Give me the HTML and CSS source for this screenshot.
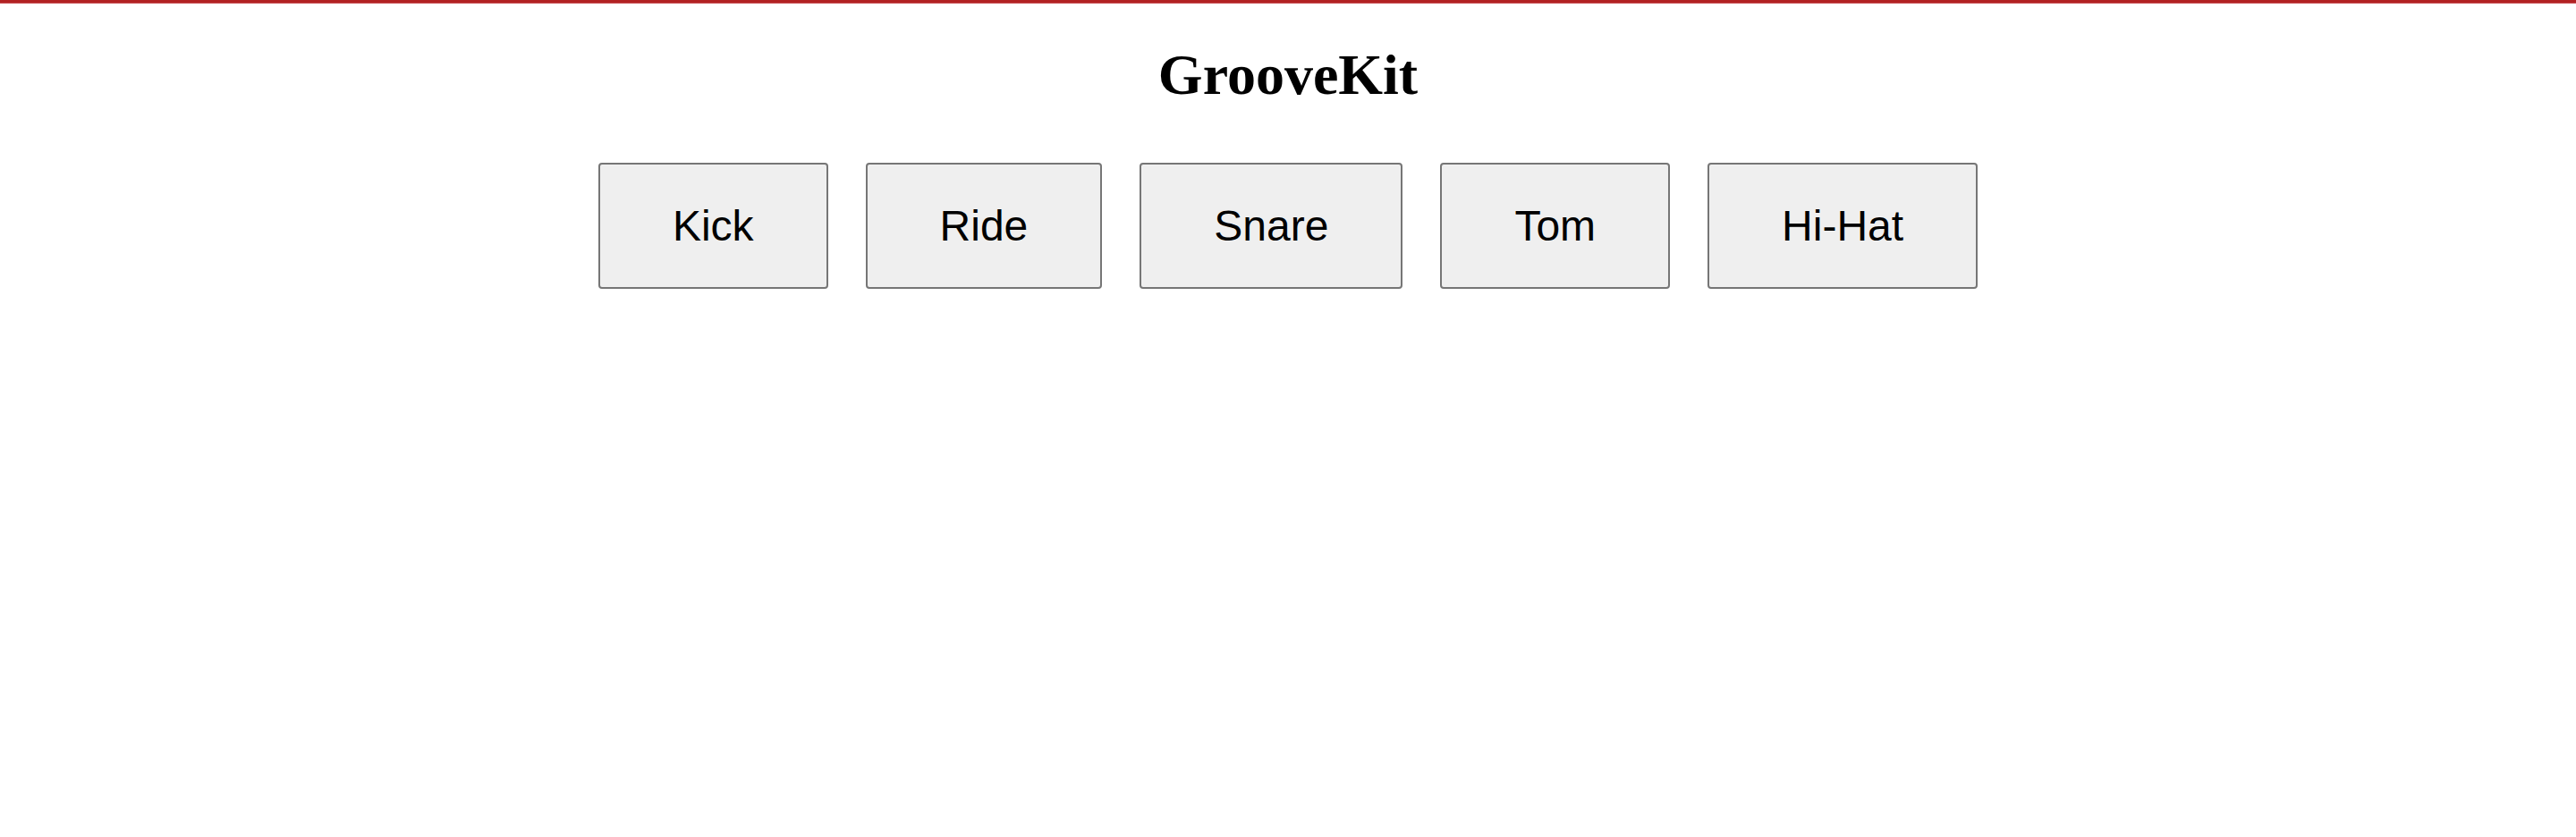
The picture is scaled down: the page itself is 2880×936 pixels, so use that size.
FILE: index.html
```html
<!DOCTYPE html>
<html lang="en">
<head>
<meta charset="utf-8">
<title>GrooveKit</title>
<link rel="stylesheet" href="styles.css">
</head>
<body>
<div class="topbar"></div>
<h1 class="title">GrooveKit</h1>
<div class="pads">
  <button class="pad">Kick</button>
  <button class="pad">Ride</button>
  <button class="pad">Snare</button>
  <button class="pad">Tom</button>
  <button class="pad">Hi-Hat</button>
</div>
</body>
</html>
```

FILE: styles.css
```css
html, body {
  margin: 0;
  padding: 0;
  background: #ffffff;
}

.topbar {
  height: 3px;
  background: #b22222;
  box-shadow: 0 1px 0 rgba(190, 50, 55, 0.85);
}

.title {
  margin: 44px 0 0;
  font-family: "Liberation Serif", "Times New Roman", serif;
  font-weight: bold;
  font-size: 64px;
  line-height: 73.6px;
  text-align: center;
  color: #000;
}

.pads {
  display: flex;
  justify-content: center;
  gap: 42px;
  margin-top: 61px;
}

.pad {
  font-family: "Liberation Sans", Arial, sans-serif;
  font-size: 48px;
  line-height: normal;
  color: #000;
  background: #efefef;
  border: 2px solid #767676;
  border-radius: 4px;
  padding: 41.4px 81px;
  margin: 0;
  cursor: pointer;
}
```
